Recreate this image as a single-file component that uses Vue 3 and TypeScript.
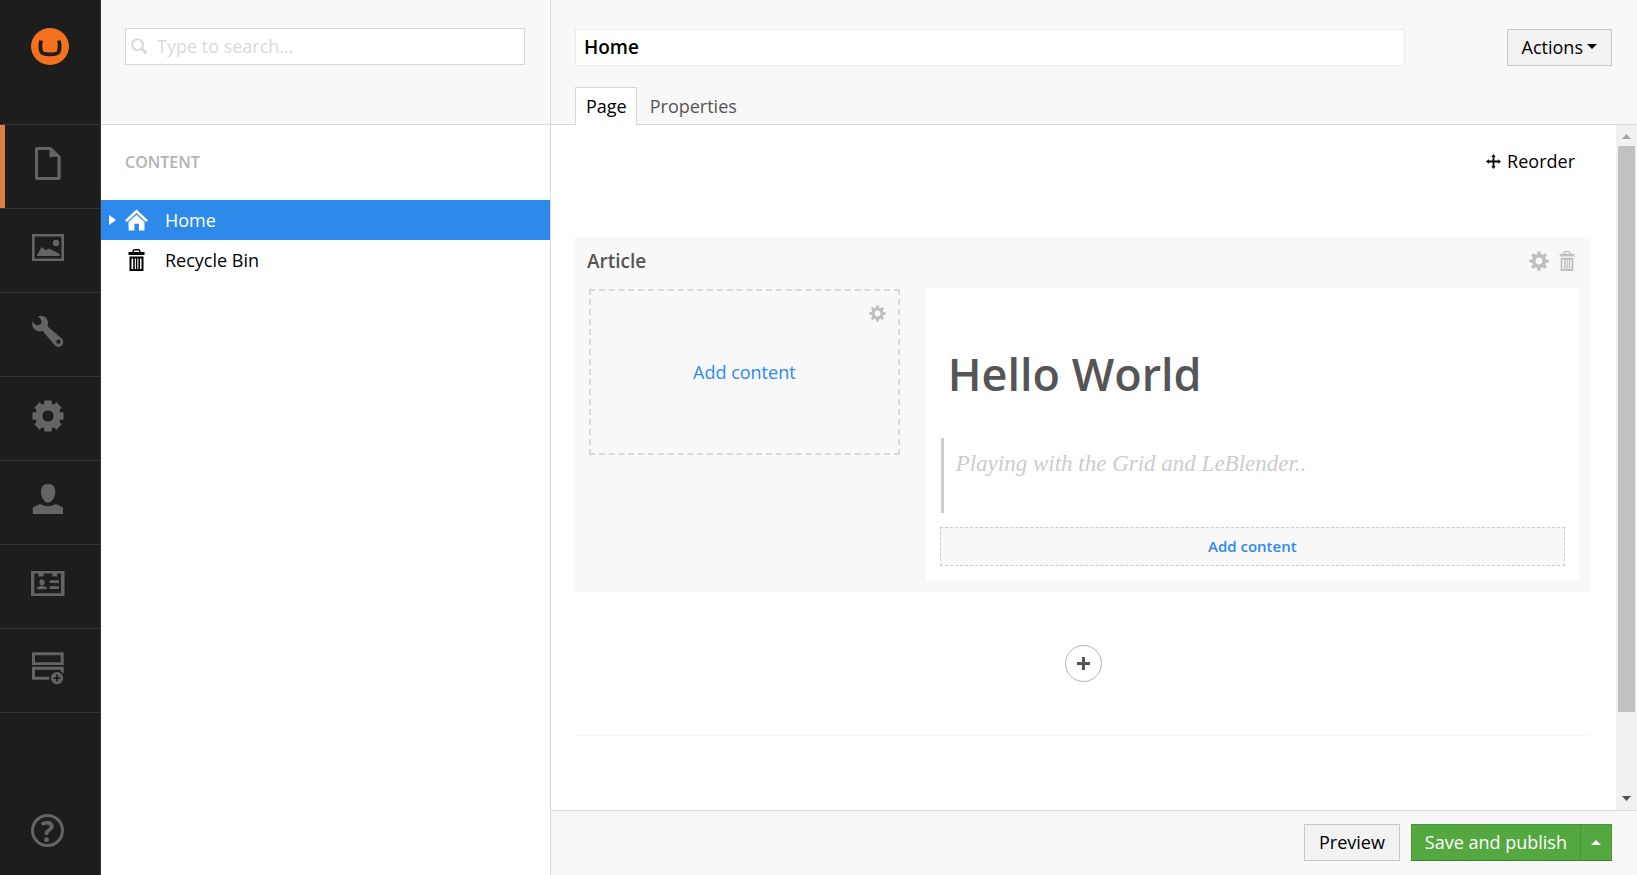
<script setup lang="ts">
import { ref } from 'vue'

interface NavItem {
  id: string
  label: string
  path: string
}

interface TreeNode {
  id: string
  label: string
  expandable: boolean
}

function gearPath(center: number, outer: number, root: number, hole: number, tip: number, base: number): string {
  const point = (radius: number, angle: number): string =>
    `${(center + radius * Math.sin(angle)).toFixed(2)} ${(center - radius * Math.cos(angle)).toFixed(2)}`
  const points: string[] = []
  for (let i = 0; i < 8; i++) {
    const angle = (i * Math.PI) / 4
    points.push(point(root, angle - base), point(outer, angle - tip), point(outer, angle + tip), point(root, angle + base))
  }
  const ring = `M${center - hole} ${center}a${hole} ${hole} 0 1 0 ${hole * 2} 0a${hole} ${hole} 0 1 0 ${-hole * 2} 0z`
  return `M${points.join('L')}Z${ring}`
}

const boldGear = gearPath(17, 16, 12.8, 5.6, 0.24, 0.3)
const fineGear = gearPath(10, 9.8, 7, 3.4, 0.13, 0.3)
const trashPath =
  'M6 3V2Q6 0 8 0H12Q14 0 14 2V3H18V6H2V3zM7.5 3H12.5V1.5H7.5zM3 7.5H17V22H3zM5 9.5V20H6.7V9.5zM8.3 9.5V20H9.4V9.5zM10.8 9.5V20H11.9V9.5zM13.5 9.5V20H15V9.5z'

const navItems: NavItem[] = [
  {
    id: 'content',
    label: 'Content',
    path: 'M6 0H20L29.7 9.5V31Q29.7 33 27.7 33H6Q4 33 4 31V2Q4 0 6 0zM7 3V30H26.5V10Q21 9 18.5 11V3z',
  },
  {
    id: 'media',
    label: 'Media',
    path: 'M1 3H33V30H1zM3.6 5.6V27.4H30.4V5.6zM25 8.7a3.2 3.2 0 1 1 0 6.4a3.2 3.2 0 1 1 0-6.4zM5.5 25L10.7 16L14.7 19.3L18 17.6L28.7 23V25z',
  },
  {
    id: 'settings',
    label: 'Settings',
    path: 'M7 1.3Q10 .2 12.5 1.3Q16.5 3.2 17 7.5L16.7 11.6L31 23.8A4.7 4.7 0 0 1 24 30.4L11.7 16Q8.5 17 5.7 15.7Q1.2 13.4 1.2 9.2L1.6 6.3Q3.5 10 6 10.3Q9 10.4 10.2 8.2Q11.7 5.3 7 1.3zM27.4 24.6a2.1 2.1 0 1 0 0 4.2a2.1 2.1 0 1 0 0-4.2z',
  },
  { id: 'developer', label: 'Developer', path: boldGear },
  {
    id: 'users',
    label: 'Users',
    path: 'M17 1C21.8 1 24.3 3.8 24.3 8.5C24.3 14 21 19.7 17 19.7S10 14 10 8.5C10 3.8 12.4 1 17 1zM9 21L12.8 22.5Q17 24 21.4 22.5L25 21L31.6 24.2Q32 24.5 32 26V31H1.8V26Q1.8 24.5 2.4 24.2z',
  },
  {
    id: 'members',
    label: 'Members',
    path: 'M0 4H33.5V29H0zM3.3 6.6V26.2H30V6.6H26.3V9.6H21.3V6.6H12.7V9.6H7.3V6.6zM11 12.4Q13.6 12.4 13.6 15.3T11 18.4T8.4 15.3T11 12.4zM6 22.3V20.5L9.5 19H12.5L15.8 20.5V22.3zM18.7 13.3H28V16H18.7zM18.7 19.2H28V21.9H18.7z',
  },
  {
    id: 'forms',
    label: 'Forms',
    path: 'M1 1.3H32.7V14H1zM4 4.3V11.3H29.7V4.3zM1 15.7H32.7V22.5L29.7 20.5V18.7H4V25.7H18.3V28.7H1zM26 21a6.1 6.1 0 1 1 0 12.2a6.1 6.1 0 1 1 0-12.2zM25.1 23.6V26.2H22.5V28H25.1V30.6H26.9V28H29.5V26.2H26.9V23.6z',
  },
]

const nodes: TreeNode[] = [
  { id: 'home', label: 'Home', expandable: true },
  { id: 'bin', label: 'Recycle Bin', expandable: false },
]

const tabs = ['Page', 'Properties']
const activeSection = ref('content')
const activeNode = ref('home')
const activeTab = ref('Page')
const search = ref('')
const pageName = ref('Home')
</script>

<template>
  <div class="app">
    <nav class="rail" aria-label="Sections">
      <a class="brand" href="#" aria-label="Umbraco">
        <svg class="brand-logo" viewBox="0 0 38 37" aria-hidden="true">
          <ellipse cx="19" cy="18.5" rx="19" ry="18.5" fill="#f5701f" />
          <path
            d="M8.3 12.2L11.8 12.8Q10.6 18.5 11.8 22.6Q12.5 24.6 19 24.6T26.2 22.6Q27.4 18.5 26.2 12.8L29.7 12.2Q31.4 19 29.6 24.3Q28.2 28.2 19 28.2T8.4 24.3Q6.6 19 8.3 12.2z"
            fill="#1d1d1d"
          />
        </svg>
      </a>
      <ul class="sections">
        <li v-for="item in navItems" :key="item.id">
          <a
            href="#"
            class="section"
            :class="{ active: item.id === activeSection }"
            :aria-label="item.label"
            @click.prevent="activeSection = item.id"
          >
            <svg class="section-icon" viewBox="0 0 34 34" aria-hidden="true">
              <path :d="item.path" fill="currentColor" fill-rule="evenodd" />
            </svg>
          </a>
        </li>
      </ul>
      <a class="help" href="#" aria-label="Help">
        <span class="help-mark">?</span>
      </a>
    </nav>

    <aside class="tree">
      <header class="tree-head">
        <label class="search">
          <svg class="search-icon" viewBox="0 0 17 17" aria-hidden="true">
            <circle cx="6.6" cy="6.6" r="5.4" fill="none" stroke="currentColor" stroke-width="2" />
            <path d="M10.7 10.7L15.4 15.2" stroke="currentColor" stroke-width="3" />
          </svg>
          <input v-model="search" type="text" placeholder="Type to search..." aria-label="Search" />
        </label>
      </header>
      <h2 class="tree-title">CONTENT</h2>
      <ul class="nodes">
        <li v-for="node in nodes" :key="node.id">
          <a
            href="#"
            class="node"
            :class="{ selected: node.id === activeNode }"
            @click.prevent="activeNode = node.id"
          >
            <span class="node-arrow">
              <svg v-if="node.expandable" viewBox="0 0 7 10" aria-hidden="true">
                <path d="M0 0L7 5L0 10z" fill="currentColor" />
              </svg>
            </span>
            <svg v-if="node.id === 'home'" class="node-icon" viewBox="0 0 24 22" aria-hidden="true">
              <path d="M12 0L24 11.2L22 13L12 3.8L2 13L0 11.2z" fill="currentColor" />
              <path d="M12 5.4L20.3 13V22H14.5V15H9.8V22H3.7V13z" fill="currentColor" />
            </svg>
            <svg v-else class="node-icon" viewBox="0 0 20 22" aria-hidden="true">
              <path :d="trashPath" fill="currentColor" fill-rule="evenodd" />
            </svg>
            <span>{{ node.label }}</span>
          </a>
        </li>
      </ul>
    </aside>

    <main class="editor">
      <header class="editor-head">
        <div class="title-row">
          <input v-model="pageName" class="title-input" type="text" aria-label="Page name" />
          <button type="button" class="btn">
            Actions
            <svg class="caret" viewBox="0 0 10 5" aria-hidden="true"><path d="M0 0H10L5 5z" fill="currentColor" /></svg>
          </button>
        </div>
        <div class="tabs" role="tablist">
          <button
            v-for="tab in tabs"
            :key="tab"
            type="button"
            role="tab"
            class="tab"
            :class="{ current: tab === activeTab }"
            :aria-selected="tab === activeTab"
            @click="activeTab = tab"
          >
            {{ tab }}
          </button>
        </div>
      </header>

      <div class="workspace">
        <div class="canvas">
          <div class="tools">
            <button type="button" class="reorder">
              <svg class="move-icon" viewBox="0 0 15 15" aria-hidden="true">
                <path
                  d="M7.5 0L9.7 3H8.4V6.6H12V5.3L15 7.5L12 9.7V8.4H8.4V12H9.7L7.5 15L5.3 12H6.6V8.4H3V9.7L0 7.5L3 5.3V6.6H6.6V3H5.3z"
                  fill="currentColor"
                />
              </svg>
              Reorder
            </button>
          </div>

          <section class="row-block">
            <header class="row-head">
              <h3>Article</h3>
              <div class="row-actions">
                <button type="button" class="icon-btn" aria-label="Row settings">
                  <svg class="icon" viewBox="0 0 20 20" aria-hidden="true">
                    <path :d="fineGear" fill="currentColor" fill-rule="evenodd" />
                  </svg>
                </button>
                <button type="button" class="icon-btn" aria-label="Delete row">
                  <svg class="icon" viewBox="0 0 20 22" aria-hidden="true">
                    <path :d="trashPath" fill="currentColor" fill-rule="evenodd" />
                  </svg>
                </button>
              </div>
            </header>
            <div class="row-columns">
              <div class="empty-cell">
                <button type="button" class="icon-btn cell-settings" aria-label="Cell settings">
                  <svg class="small-icon" viewBox="0 0 20 20" aria-hidden="true">
                    <path :d="fineGear" fill="currentColor" fill-rule="evenodd" />
                  </svg>
                </button>
                <button type="button" class="add-link">Add content</button>
              </div>
              <div class="filled-cell">
                <h1>Hello World</h1>
                <blockquote>Playing with the Grid and LeBlender..</blockquote>
                <button type="button" class="add-bar">Add content</button>
              </div>
            </div>
          </section>

          <div class="add-row">
            <button type="button" class="add-circle" aria-label="Add row">
              <svg class="plus" viewBox="0 0 13 13" aria-hidden="true">
                <path d="M5 0H8V5H13V8H8V13H5V8H0V5H5z" fill="currentColor" />
              </svg>
            </button>
          </div>
        </div>

        <div class="scrollbar" aria-hidden="true">
          <svg class="scroll-arrow up" viewBox="0 0 21 21"><path d="M6 14H15L10.5 9z" fill="currentColor" /></svg>
          <div class="scroll-track"><div class="scroll-thumb"></div></div>
          <svg class="scroll-arrow" viewBox="0 0 21 21"><path d="M6 7H15L10.5 12z" fill="currentColor" /></svg>
        </div>
      </div>

      <footer class="editor-foot">
        <button type="button" class="btn">Preview</button>
        <div class="publish">
          <button type="button" class="btn green">Save and publish</button>
          <button type="button" class="btn green more" aria-label="More publishing options">
            <svg class="caret" viewBox="0 0 10 5" aria-hidden="true"><path d="M0 5H10L5 0z" fill="currentColor" /></svg>
          </button>
        </div>
      </footer>
    </main>
  </div>
</template>

<style>
body {
  margin: 0;
}
</style>

<style scoped>
.app {
  display: flex;
  min-height: 100vh;
  background: #fff;
  color: #000;
  font-family: 'Open Sans', 'Noto Sans', sans-serif;
  font-size: 18px;
  line-height: 24px;
}

.app *,
.app *::before {
  box-sizing: border-box;
}

a {
  color: inherit;
  text-decoration: none;
}

button,
input {
  font: inherit;
  color: inherit;
  border-radius: 0;
}

button {
  margin: 0;
  padding: 0;
  border: 0;
  background: none;
  cursor: pointer;
}

svg {
  display: block;
}

ul {
  margin: 0;
  padding: 0;
  list-style: none;
}

/* Section rail */
.rail {
  flex: none;
  display: flex;
  flex-direction: column;
  width: 101px;
  border-right: 1px solid #343434;
  background: #1d1d1d;
  color: #646464;
}

.brand {
  display: block;
  height: 124px;
  padding: 28px 31px 0;
}

.brand-logo {
  width: 38px;
  height: 37px;
}

.sections {
  border-top: 1px solid #343434;
}

.section {
  position: relative;
  display: block;
  height: 84px;
  padding: 22px 0 0 31px;
  border-bottom: 1px solid #343434;
}

.section.active::before {
  content: '';
  position: absolute;
  top: 0;
  bottom: 0;
  left: 0;
  width: 5px;
  background: #df7f48;
}

.section-icon {
  width: 34px;
  height: 34px;
}

.help {
  margin-top: auto;
  padding: 0 0 28px 31px;
}

.help-mark {
  display: flex;
  align-items: center;
  justify-content: center;
  width: 33px;
  height: 33px;
  border: 3px solid currentColor;
  border-radius: 50%;
  font-size: 28px;
  font-weight: 700;
}

/* Content tree */
.tree {
  flex: none;
  width: 450px;
  border-right: 1px solid #d9d9d9;
}

.tree-head {
  height: 125px;
  padding: 28px 25px 0 24px;
  border-bottom: 1px solid #d9d9d9;
  background: #f8f8f8;
}

.search {
  display: flex;
  align-items: center;
  height: 37px;
  padding-left: 5px;
  border: 1px solid #d9d9d9;
  background: #fff;
  color: #d9d9d9;
}

.search-icon {
  flex: none;
  width: 17px;
  height: 17px;
}

.search input {
  flex: 1;
  min-width: 0;
  padding: 0 9px 2px;
  border: 0;
  outline: 0;
  background: transparent;
  color: #000;
}

.search input::placeholder {
  color: #d9d9d9;
  opacity: 1;
}

.tree-title {
  margin: 0;
  padding: 25px 24px 26px;
  color: #b3b3b3;
  font-size: 16px;
  font-weight: 600;
}

.node {
  display: flex;
  align-items: center;
  height: 40px;
  padding-left: 8px;
}

.node.selected {
  background: #2e8aea;
  color: #fff;
}

.node-arrow {
  width: 16px;
}

.node-arrow svg {
  width: 7px;
  height: 10px;
}

.node-icon {
  width: 23px;
  height: 22px;
  margin-right: 17px;
}

/* Editor */
.editor {
  flex: 1;
  display: flex;
  flex-direction: column;
  min-width: 0;
}

.editor-head {
  height: 125px;
  padding: 29px 25px 0 24px;
  border-bottom: 1px solid #d9d9d9;
  background: #f8f8f8;
}

.title-row {
  display: flex;
  justify-content: space-between;
}

.title-input {
  width: 80%;
  height: 37px;
  padding: 0 8px 2px;
  border: 1px solid #ebebeb;
  outline: 0;
  background: #fff;
  font-size: 19px;
  font-weight: 600;
}

.btn {
  display: flex;
  align-items: center;
  gap: 4px;
  height: 37px;
  padding: 0 14px 2px;
  border: 1px solid #c8c8c8;
  background: #f2f2f2;
  white-space: nowrap;
}

.caret {
  width: 10px;
  height: 5px;
}

.tabs {
  display: flex;
  margin-top: 21px;
}

.tab {
  height: 38px;
  padding: 0 13px;
  color: #555;
}

.tab.current {
  padding: 0 9px 1px 10px;
  border: 1px solid #d9d9d9;
  border-bottom: 0;
  background: #fff;
  color: #000;
}

.workspace {
  flex: 1;
  display: flex;
}

.canvas {
  flex: 1;
  min-width: 0;
  padding: 24px 25px 0 24px;
}

.tools {
  display: flex;
  justify-content: flex-end;
  padding-right: 16px;
}

.reorder {
  display: flex;
  align-items: center;
  gap: 6px;
}

.move-icon {
  width: 15px;
  height: 15px;
}

.row-block {
  margin-top: 64px;
  padding-bottom: 12px;
  background: #f8f8f8;
}

.row-head {
  display: flex;
  align-items: center;
  justify-content: space-between;
  height: 51px;
  padding: 0 14px 4px 12px;
}

.row-head h3 {
  margin: 0;
  color: #555;
  font-size: 19px;
  font-weight: 600;
}

.row-actions {
  display: flex;
  align-items: center;
  gap: 8px;
}

.icon-btn {
  color: #bfbfbf;
}

.icon {
  width: 20px;
  height: 20px;
}

.small-icon {
  width: 17px;
  height: 17px;
}

.row-columns {
  display: grid;
  grid-template-columns: 1fr 2fr;
  align-items: start;
}

.empty-cell {
  position: relative;
  display: flex;
  align-items: center;
  justify-content: center;
  height: 166px;
  margin: 1px 14px 0;
  border: 2px dashed #d9d9d9;
}

.cell-settings {
  position: absolute;
  top: 14px;
  right: 12px;
}

.add-link {
  color: #2e8aea;
}

.filled-cell {
  margin: 0 12px;
  padding: 55px 14px 14px;
  background: #fff;
}

h1 {
  margin: 0 0 33px;
  padding-left: 8px;
  color: #555;
  font-size: 45px;
  font-weight: 600;
  line-height: 62px;
}

blockquote {
  margin: 0 0 14px 1px;
  padding: 12px 12px 35px;
  border-left: 3px solid #ccc;
  color: #ccc;
  font-family: 'Liberation Serif', serif;
  font-size: 23px;
  font-style: italic;
  line-height: 28px;
}

.add-bar {
  width: 100%;
  height: 39px;
  padding-bottom: 2px;
  border: 1px dashed #ccc;
  background: #f8f8f8;
  color: #2e8aea;
  font-size: 15px;
  font-weight: 600;
}

.add-row {
  display: flex;
  justify-content: center;
  padding: 53px 0;
  border-bottom: 1px solid #f8f8f8;
}

.add-circle {
  display: grid;
  place-items: center;
  width: 37px;
  height: 37px;
  border: 1px solid #b3b3b3;
  border-radius: 50%;
  color: #555;
}

.plus {
  width: 13px;
  height: 13px;
}

/* Scrollbar */
.scrollbar {
  flex: none;
  display: flex;
  flex-direction: column;
  width: 21px;
  background: #f1f1f1;
}

.scroll-arrow {
  width: 21px;
  height: 21px;
  color: #505050;
}

.scroll-arrow.up {
  color: #a3a3a3;
}

.scroll-track {
  flex: 1;
  padding: 0 2px;
}

.scroll-thumb {
  height: 88%;
  background: #c1c1c1;
}

.editor-foot {
  display: flex;
  justify-content: flex-end;
  gap: 11px;
  height: 65px;
  padding: 13px 25px 0;
  border-top: 1px solid #d9d9d9;
  background: #f8f8f8;
}

.publish {
  display: flex;
}

.btn.green {
  padding: 0 13px 2px;
  border-color: #499437;
  border-bottom-color: #3f8030;
  background: #53a93f;
  color: #fff;
}

.btn.green.more {
  padding: 0 10px;
  border-left: 0;
}
</style>
